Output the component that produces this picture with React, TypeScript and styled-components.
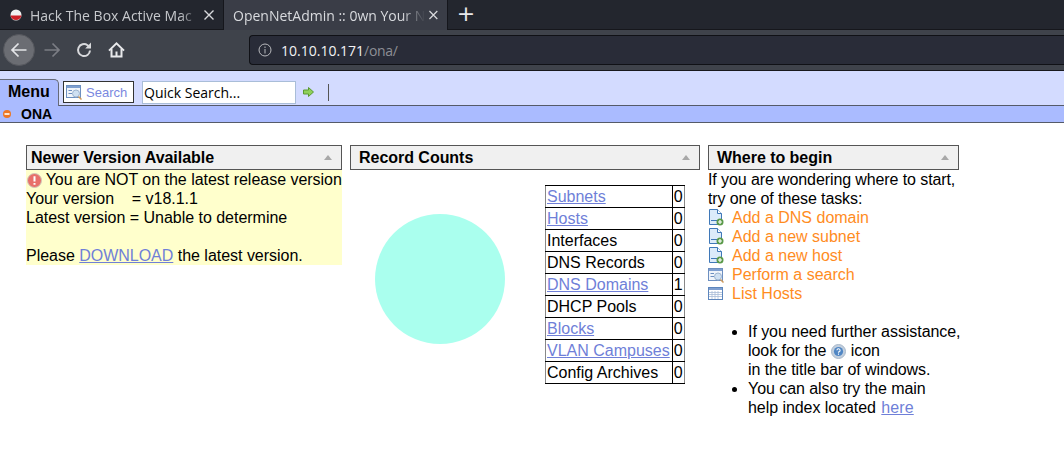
import React from 'react';
import styled, {createGlobalStyle} from "styled-components";

const GlobalStyle = createGlobalStyle`
  html, body {
    margin: 0;
    padding: 0;
    background: #ffffff;
    font-family: "Liberation Sans", Arial, sans-serif;
    font-size: 16px;
    line-height: 19px;
    color: #000000;
  }
`

const counts = [
    {label: 'Subnets', value: 0, link: true},
    {label: 'Hosts', value: 0, link: true},
    {label: 'Interfaces', value: 0},
    {label: 'DNS Records', value: 0},
    {label: 'DNS Domains', value: 1, link: true},
    {label: 'DHCP Pools', value: 0},
    {label: 'Blocks', value: 0, link: true},
    {label: 'VLAN Campuses', value: 0, link: true},
    {label: 'Config Archives', value: 0},
]

const PageAddIcon = () => (
    <svg width="16" height="17" viewBox="0 0 16 17">
        <path d="M1.5 .5H9.5L13.5 4.5V15.5H1.5Z" fill="#dcebfa" stroke="#3f78b8"/>
        <path d="M9.5 .5V4.5H13.5" fill="#ffffff" stroke="#3f78b8"/>
        <rect x="3" y="11" width="6" height="1" fill="#3f78b8"/>
        <circle cx="12" cy="13" r="3.5" fill="#5b9a4a"/>
        <path d="M10 13H14M12 11V15" stroke="#ffffff" strokeWidth="1.2"/>
    </svg>
)

const SearchFormIcon = () => (
    <svg width="16" height="16" viewBox="0 0 16 16">
        <rect x=".5" y="1.5" width="14" height="12" fill="#f0f4fa" stroke="#6d8fc0"/>
        <rect x="1" y="2" width="13" height="2" fill="#7f9fd0"/>
        <path d="M2.5 6.5H6M2.5 9.5H6" stroke="#6d8fc0"/>
        <circle cx="10" cy="9.5" r="3.5" fill="#cfe0f2" stroke="#9db4cf"/>
        <path d="M12.5 12.5L15.5 15.5" stroke="#d09a5a" strokeWidth="1.5"/>
    </svg>
)

const ListIcon = () => (
    <svg width="16" height="16" viewBox="0 0 16 16">
        <rect x=".5" y="1.5" width="14" height="12" fill="#ffffff" stroke="#5d86bd"/>
        <rect x="1" y="2" width="13" height="2" fill="#7f9fd0"/>
        <path d="M1 6.5H14M1 8.5H14M1 10.5H14M4 5V13M7 5V13M10 5V13" stroke="#a9bcd8" strokeWidth=".8"/>
    </svg>
)

const AlertIcon = () => (
    <svg width="15" height="15" viewBox="0 0 15 15">
        <circle cx="7.5" cy="7.5" r="7" fill="#e8706a" stroke="#cfc8b8"/>
        <path d="M7.5 3.2V8.6M7.5 10V11.8" stroke="#ffffff" strokeWidth="2"/>
    </svg>
)

const HelpIcon = () => (
    <svg width="15" height="15" viewBox="0 0 15 15">
        <circle cx="7.5" cy="7.5" r="7" fill="#c2cfde" stroke="#a8b8ca"/>
        <circle cx="7.5" cy="7.5" r="4.6" fill="#4f86c4"/>
        <path d="M5.9 6.2A1.6 1.6 0 1 1 7.5 8V8.8M7.5 9.6V10.8" fill="none" stroke="#ffffff" strokeWidth="1.1"/>
    </svg>
)

const StatusIcon = () => (
    <svg width="8" height="8" viewBox="0 0 8 8">
        <circle cx="4" cy="4" r="4" fill="#ee7722"/>
        <rect x="1.5" y="3" width="5" height="2" fill="#ffe6cc"/>
    </svg>
)

const NavBack = () => (
    <svg width="18" height="18" viewBox="0 0 18 18" fill="none" stroke="#e4e5e8" strokeWidth="1.7">
        <path d="M16.5 9H2M8.5 2.5L2 9L8.5 15.5"/>
    </svg>
)

const NavForward = () => (
    <svg width="18" height="18" viewBox="0 0 18 18" fill="none" stroke="#7b7d84" strokeWidth="1.7">
        <path d="M1.5 9H16M9.5 2.5L16 9L9.5 15.5"/>
    </svg>
)

const NavReload = () => (
    <svg width="16" height="16" viewBox="0 0 16 16" fill="none" stroke="#d8d9dc" strokeWidth="2">
        <path d="M14 8.5A6 6 0 1 1 11.5 3.2L14.2 5.4"/>
        <path d="M15 .5V6.4H9.2" fill="#d8d9dc" stroke="none"/>
    </svg>
)

const NavHome = () => (
    <svg width="17" height="16" viewBox="0 0 17 16" fill="none" stroke="#e8e9eb" strokeWidth="2">
        <path d="M1 8.6L8.5 1.4L16 8.6"/>
        <path d="M3.5 7V14.6H13.5V7"/>
        <rect x="7.5" y="9.5" width="2" height="4.5" fill="#e8e9eb" stroke="none"/>
    </svg>
)

const InfoIcon = () => (
    <svg width="14" height="14" viewBox="0 0 14 14" fill="none" stroke="#b8b9bd">
        <circle cx="7" cy="7" r="6"/>
        <path d="M7 6V10.5M7 3.5V5"/>
    </svg>
)

const CloseIcon = () => (
    <svg width="10" height="10" viewBox="0 0 10 10" stroke="#d8d9dc" strokeWidth="1.4">
        <path d="M.5 .5L9.5 9.5M9.5 .5L.5 9.5"/>
    </svg>
)

const GoArrow = () => (
    <svg width="11" height="10" viewBox="0 0 11 10">
        <path d="M.5 3H5.5V.5L10.5 5L5.5 9.5V7H.5Z" fill="#8fd05a" stroke="#5a9a30"/>
    </svg>
)

const Favicon = () => (
    <svg width="12" height="12" viewBox="0 0 12 12">
        <circle cx="6" cy="6" r="5.5" fill="#f0f0f0"/>
        <path d="M.6 6.5H11.4A5.5 5.5 0 0 1 .6 6.5Z" fill="#cc1f26"/>
    </svg>
)

const App = () => {
    return (
        <>
            <GlobalStyle/>
            <TabStrip>
                <Tab>
                    <Favicon/>
                    <TabTitle>Hack The Box Active Mac</TabTitle>
                    <CloseIcon/>
                </Tab>
                <Tab active>
                    <TabTitle>OpenNetAdmin :: 0wn Your N</TabTitle>
                    <CloseIcon/>
                </Tab>
                <NewTab>+</NewTab>
            </TabStrip>
            <NavBar>
                <BackButton><NavBack/></BackButton>
                <NavIcon><NavForward/></NavIcon>
                <NavIcon><NavReload/></NavIcon>
                <NavIcon><NavHome/></NavIcon>
                <AddressBar>
                    <InfoIcon/>
                    <Host>10.10.10.171<PathPart>/ona/</PathPart></Host>
                </AddressBar>
            </NavBar>
            <MenuBar>
                <MenuTab>Menu</MenuTab>
                <SearchButton><SearchFormIcon/>Search</SearchButton>
                <QuickSearch defaultValue="Quick Search..."/>
                <GoArrow/>
                <Separator/>
            </MenuBar>
            <SubBar>
                <StatusIcon/>
                ONA
            </SubBar>
            <Content>
                <Panel width={316}>
                    <PanelHeader>Newer Version Available<Collapse/></PanelHeader>
                    <Notice>
                        <InlineIcon><AlertIcon/></InlineIcon> You are NOT on the latest release version<br/>
                        Your version &nbsp;&nbsp; = v18.1.1<br/>
                        Latest version = Unable to determine<br/>
                        <br/>
                        Please <Link href="#">DOWNLOAD</Link> the latest version.
                    </Notice>
                </Panel>
                <Panel width={350}>
                    <PanelHeader inset>Record Counts<Collapse/></PanelHeader>
                    <CountsBody>
                        <svg width="130" height="130" viewBox="0 0 130 130">
                            <circle cx="65" cy="65" r="65" fill="#aaffee"/>
                        </svg>
                        <CountTable>
                            <tbody>
                            {counts.map(row => (
                                <tr key={row.label}>
                                    <CountCell>{row.link ? <Link href="#">{row.label}</Link> : row.label}</CountCell>
                                    <ValueCell>{row.value}</ValueCell>
                                </tr>
                            ))}
                            </tbody>
                        </CountTable>
                    </CountsBody>
                </Panel>
                <Panel width={251}>
                    <PanelHeader inset>Where to begin<Collapse/></PanelHeader>
                    <Intro>If you are wondering where to start,<br/>try one of these tasks:</Intro>
                    <TaskRow><PageAddIcon/><TaskLink href="#">Add a DNS domain</TaskLink></TaskRow>
                    <TaskRow><PageAddIcon/><TaskLink href="#">Add a new subnet</TaskLink></TaskRow>
                    <TaskRow><PageAddIcon/><TaskLink href="#">Add a new host</TaskLink></TaskRow>
                    <TaskRow><SearchFormIcon/><TaskLink href="#">Perform a search</TaskLink></TaskRow>
                    <TaskRow><ListIcon/><TaskLink href="#">List Hosts</TaskLink></TaskRow>
                    <HelpList>
                        <li>
                            If you need further assistance,<br/>
                            look for the <InlineIcon><HelpIcon/></InlineIcon> icon<br/>
                            in the title bar of windows.
                        </li>
                        <li>
                            You can also try the main<br/>
                            help index located <Link href="#">here</Link>
                        </li>
                    </HelpList>
                </Panel>
            </Content>
        </>
    );
};

export default App;

const TabStrip = styled.div`
  display: flex;
  height: 30px;
  background: #23262e;
  box-shadow: inset 0 -1px 0 #16171c;
`

const Tab = styled.div<{active?: boolean}>`
  display: flex;
  align-items: center;
  gap: 8px;
  box-sizing: border-box;
  width: 224px;
  height: 30px;
  padding: 0 9px 0 ${p => p.active ? 9 : 10}px;
  background: ${p => p.active ? '#3a3d47' : 'transparent'};
  border-right: 1px solid #15161c;
  color: ${p => p.active ? '#d8dade' : '#c6c8cc'};
  font-family: "Open Sans", sans-serif;
  font-size: 14px;
`

const TabTitle = styled.span`
  flex: 1;
  margin-right: -4px;
  white-space: nowrap;
  mask-image: linear-gradient(to right, #000 88%, transparent 100%);
`

const NewTab = styled.div`
  width: 36px;
  text-align: center;
  color: #e8e8ea;
  font-family: "DejaVu Sans", sans-serif;
  font-size: 22px;
  line-height: 27px;
`

const NavBar = styled.div`
  display: flex;
  align-items: center;
  box-sizing: border-box;
  height: 41px;
  padding-left: 3px;
  background: #3f434b;
  border-bottom: 1px solid #17181d;
`

const BackButton = styled.div`
  display: flex;
  align-items: center;
  justify-content: center;
  width: 32px;
  height: 32px;
  margin-right: 1px;
  border-radius: 50%;
  background: #6b6d73;
  border: 1px solid #55575d;
  box-sizing: border-box;
`

const NavIcon = styled.div`
  display: flex;
  align-items: center;
  justify-content: center;
  width: 32px;
  height: 32px;
`

const AddressBar = styled.div`
  display: flex;
  align-items: center;
  gap: 9px;
  flex: 1;
  box-sizing: border-box;
  height: 30px;
  margin-left: 117px;
  padding-left: 8px;
  background: #292c38;
  border: 1px solid #101116;
  border-right: 0;
  border-radius: 4px 0 0 4px;
`

const Host = styled.span`
  color: #f2f2f3;
  font-family: "Open Sans", sans-serif;
  font-size: 14px;
`

const PathPart = styled.span`
  color: #8d8f95;
  letter-spacing: -0.3px;
`

const MenuBar = styled.div`
  display: flex;
  align-items: center;
  box-sizing: border-box;
  height: 35px;
  padding-top: 8px;
  background: #d3dbff;
  border-bottom: 1px solid #555a68;
`

const MenuTab = styled.div`
  box-sizing: border-box;
  align-self: flex-end;
  width: 59px;
  height: 27px;
  margin-bottom: -1px;
  padding-left: 8px;
  background: #aabbff;
  border: 1px solid #666a78;
  border-width: 1px 1px 0 0;
  border-radius: 0 5px 0 0;
  font-weight: 700;
  line-height: 24px;
  color: #000000;
`

const SearchButton = styled.div`
  display: flex;
  align-items: center;
  gap: 4px;
  box-sizing: border-box;
  width: 71px;
  height: 22px;
  margin: 0 8px 0 4px;
  padding-left: 2px;
  background: #ffffff;
  border: 1px solid #333333;
  color: #7a88e0;
  font-size: 13px;
`

const QuickSearch = styled.input`
  box-sizing: border-box;
  width: 154px;
  height: 23px;
  margin: 0 7px 0 0;
  padding: 0 1px;
  background: #ffffff;
  border: 1px solid #a9bdd8;
  outline: none;
  color: #000000;
  font-family: "Open Sans", sans-serif;
  font-size: 14px;
`

const Separator = styled.div`
  width: 1px;
  height: 17px;
  margin-left: 14px;
  background: #555555;
`

const SubBar = styled.div`
  display: flex;
  align-items: center;
  gap: 10px;
  box-sizing: border-box;
  height: 17px;
  padding-left: 3px;
  background: #aabbff;
  border-bottom: 1px solid #555a68;
  font-size: 14px;
  font-weight: 700;
  color: #000000;
`

const Content = styled.main`
  display: flex;
  align-items: flex-start;
  gap: 8px;
  padding: 22px 0 0 26px;
`

const Panel = styled.section<{width: number}>`
  flex: none;
  width: ${p => p.width}px;
  white-space: nowrap;
`

const PanelHeader = styled.h2<{inset?: boolean}>`
  display: flex;
  align-items: center;
  justify-content: space-between;
  box-sizing: border-box;
  height: 25px;
  margin: 0;
  padding: 0 9px 0 ${p => p.inset ? 8 : 4}px;
  background: #f0f0f0;
  border: 1px solid #555555;
  font-size: 16px;
  font-weight: 700;
  line-height: 19px;
  letter-spacing: -0.03px;
`

const Collapse = styled.span`
  width: 0;
  height: 0;
  border: 4px solid transparent;
  border-top: 0;
  border-bottom: 5px solid #a8a8a8;
`

const Notice = styled.div`
  background: #ffffcc;
  letter-spacing: -0.02px;
`

const InlineIcon = styled.span`
  display: inline-block;
  width: 15px;
  height: 15px;
  margin: -4px 0 0 .5px;
  line-height: 0;
  vertical-align: -3px;
`

const Link = styled.a`
  color: #6f7fd8;
  text-decoration: underline;
`

const CountsBody = styled.div`
  display: flex;
  align-items: flex-start;
  gap: 40px;
  padding: 15px 0 0 25px;

  svg {
    margin-top: 29px;
  }
`

const CountTable = styled.table`
  border-collapse: collapse;
  border: 1px solid #888888;
`

const CountCell = styled.td`
  height: 21px;
  padding: 0 2px 0 1px;
  border: 1px solid #000000;
  border-left: 0;
  line-height: 19px;
`

const ValueCell = styled(CountCell)`
  padding: 0 1px;
  border-right: 0;
`

const Intro = styled.div`
  letter-spacing: -0.1px;
`

const TaskRow = styled.div`
  display: flex;
  align-items: center;
  gap: 8px;
  height: 19px;
`

const TaskLink = styled.a`
  color: #ff8c1e;
  text-decoration: none;
`

const HelpList = styled.ul`
  margin: 19px 0 0;
  padding-left: 40px;
  letter-spacing: -0.06px;

  a {
    margin-left: 1px;
    letter-spacing: 0.1px;
  }
`
